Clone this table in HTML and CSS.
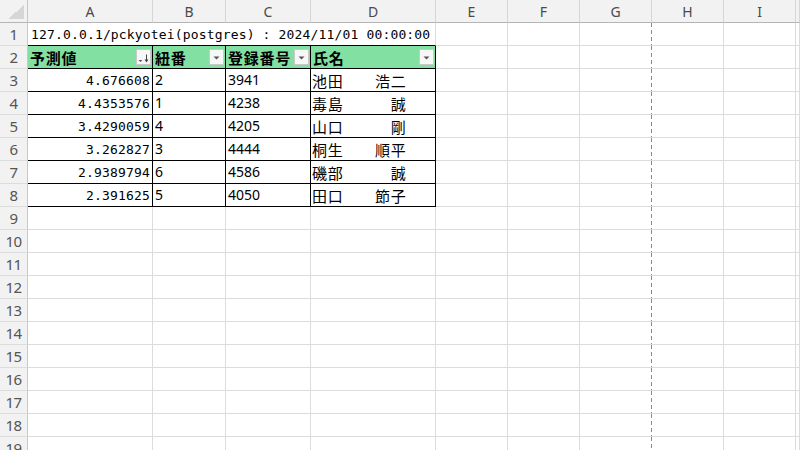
FILE: index.html
```html
<!DOCTYPE html>
<html lang="ja">
<head>
<meta charset="utf-8">
<title>Sheet</title>
<link rel="stylesheet" href="styles.css">
</head>
<body>
<div class="sheet">
  <!-- column headers -->
  <div class="corner"></div>
  <div class="ch">A</div><div class="ch">B</div><div class="ch">C</div><div class="ch">D</div><div class="ch">E</div><div class="ch">F</div><div class="ch">G</div><div class="ch">H</div><div class="ch">I</div><div class="ch"></div>

  <!-- row 1 -->
  <div class="rh">1</div>
  <div class="c title">127.0.0.1/pckyotei(postgres) : 2024/11/01 00:00:00</div>
  <div class="c"></div><div class="c"></div><div class="c pb"></div><div class="c"></div><div class="c"></div><div class="c"></div>

  <!-- row 2 -->
  <div class="rh">2</div>
  <div class="c tb th"><span>予測値</span><span class="fbtn"><svg width="13" height="13" viewBox="0 0 13 13"><polygon points="1.5,9 5.5,9 3.5,11" fill="#555"/><path d="M9.5 3.5V10.5" stroke="#444" stroke-width="1"/><polygon points="7.5,8.5 11.5,8.5 9.5,11.5" fill="#444"/></svg></span></div>
  <div class="c tb th"><span>紐番</span><span class="fbtn"><svg width="13" height="13" viewBox="0 0 13 13"><polygon points="3.5,5.5 9.5,5.5 6.5,8.5" fill="#555"/></svg></span></div>
  <div class="c tb th"><span>登録番号</span><span class="fbtn"><svg width="13" height="13" viewBox="0 0 13 13"><polygon points="3.5,5.5 9.5,5.5 6.5,8.5" fill="#555"/></svg></span></div>
  <div class="c tb th"><span>氏名</span><span class="fbtn"><svg width="13" height="13" viewBox="0 0 13 13"><polygon points="3.5,5.5 9.5,5.5 6.5,8.5" fill="#555"/></svg></span></div>
  <div class="c"></div><div class="c"></div><div class="c pb"></div><div class="c"></div><div class="c"></div><div class="c"></div>

  <!-- row 3 -->
  <div class="rh">3</div>
  <div class="c tb num">4.676608</div><div class="c tb t">2</div><div class="c tb t">3941</div><div class="c tb nm">池田　　浩二</div>
  <div class="c"></div><div class="c"></div><div class="c pb"></div><div class="c"></div><div class="c"></div><div class="c"></div>

  <!-- row 4 -->
  <div class="rh">4</div>
  <div class="c tb num">4.4353576</div><div class="c tb t">1</div><div class="c tb t">4238</div><div class="c tb nm">毒島　　　誠</div>
  <div class="c"></div><div class="c"></div><div class="c pb"></div><div class="c"></div><div class="c"></div><div class="c"></div>

  <!-- row 5 -->
  <div class="rh">5</div>
  <div class="c tb num">3.4290059</div><div class="c tb t">4</div><div class="c tb t">4205</div><div class="c tb nm">山口　　　剛</div>
  <div class="c"></div><div class="c"></div><div class="c pb"></div><div class="c"></div><div class="c"></div><div class="c"></div>

  <!-- row 6 -->
  <div class="rh">6</div>
  <div class="c tb num">3.262827</div><div class="c tb t">3</div><div class="c tb t">4444</div><div class="c tb nm">桐生　　順平</div>
  <div class="c"></div><div class="c"></div><div class="c pb"></div><div class="c"></div><div class="c"></div><div class="c"></div>

  <!-- row 7 -->
  <div class="rh">7</div>
  <div class="c tb num">2.9389794</div><div class="c tb t">6</div><div class="c tb t">4586</div><div class="c tb nm">磯部　　　誠</div>
  <div class="c"></div><div class="c"></div><div class="c pb"></div><div class="c"></div><div class="c"></div><div class="c"></div>

  <!-- row 8 -->
  <div class="rh">8</div>
  <div class="c tb num">2.391625</div><div class="c tb t">5</div><div class="c tb t">4050</div><div class="c tb nm">田口　　節子</div>
  <div class="c"></div><div class="c"></div><div class="c pb"></div><div class="c"></div><div class="c"></div><div class="c"></div>

  <!-- rows 9-19 -->
  <div class="rh">9</div><div class="c"></div><div class="c"></div><div class="c"></div><div class="c"></div><div class="c"></div><div class="c"></div><div class="c pb"></div><div class="c"></div><div class="c"></div><div class="c"></div>
  <div class="rh">10</div><div class="c"></div><div class="c"></div><div class="c"></div><div class="c"></div><div class="c"></div><div class="c"></div><div class="c pb"></div><div class="c"></div><div class="c"></div><div class="c"></div>
  <div class="rh">11</div><div class="c"></div><div class="c"></div><div class="c"></div><div class="c"></div><div class="c"></div><div class="c"></div><div class="c pb"></div><div class="c"></div><div class="c"></div><div class="c"></div>
  <div class="rh">12</div><div class="c"></div><div class="c"></div><div class="c"></div><div class="c"></div><div class="c"></div><div class="c"></div><div class="c pb"></div><div class="c"></div><div class="c"></div><div class="c"></div>
  <div class="rh">13</div><div class="c"></div><div class="c"></div><div class="c"></div><div class="c"></div><div class="c"></div><div class="c"></div><div class="c pb"></div><div class="c"></div><div class="c"></div><div class="c"></div>
  <div class="rh">14</div><div class="c"></div><div class="c"></div><div class="c"></div><div class="c"></div><div class="c"></div><div class="c"></div><div class="c pb"></div><div class="c"></div><div class="c"></div><div class="c"></div>
  <div class="rh">15</div><div class="c"></div><div class="c"></div><div class="c"></div><div class="c"></div><div class="c"></div><div class="c"></div><div class="c pb"></div><div class="c"></div><div class="c"></div><div class="c"></div>
  <div class="rh">16</div><div class="c"></div><div class="c"></div><div class="c"></div><div class="c"></div><div class="c"></div><div class="c"></div><div class="c pb"></div><div class="c"></div><div class="c"></div><div class="c"></div>
  <div class="rh">17</div><div class="c"></div><div class="c"></div><div class="c"></div><div class="c"></div><div class="c"></div><div class="c"></div><div class="c pb"></div><div class="c"></div><div class="c"></div><div class="c"></div>
  <div class="rh">18</div><div class="c"></div><div class="c"></div><div class="c"></div><div class="c"></div><div class="c"></div><div class="c"></div><div class="c pb"></div><div class="c"></div><div class="c"></div><div class="c"></div>
  <div class="rh">19</div><div class="c"></div><div class="c"></div><div class="c"></div><div class="c"></div><div class="c"></div><div class="c"></div><div class="c pb"></div><div class="c"></div><div class="c"></div><div class="c"></div>
</div>
</body>
</html>
```
FILE: styles.css
```css
* { box-sizing: border-box; }
html, body {
  margin: 0;
  padding: 0;
  background: #fff;
  width: 800px;
  height: 450px;
  overflow: hidden;
}
.sheet {
  display: grid;
  grid-template-columns: 28px 125px 73px 85px 125px 72px 72px 72px 72px 72px 1fr;
  grid-auto-rows: 23px;
  width: 800px;
  font-family: "Noto Sans CJK JP", "Noto Sans", sans-serif;
  color: #000;
}
.corner {
  background: #f2f2f2 linear-gradient(to bottom right, transparent 50%, #d6d6d6 50%) no-repeat right 3px bottom 3px / 16px 14px;
  border-right: 1px solid #c8c8c8;
  border-bottom: 1px solid #b5b5b5;
}
.ch {
  background: #f2f2f2;
  border-right: 1px solid #d6d6d6;
  border-bottom: 1px solid #b5b5b5;
  display: flex;
  align-items: center;
  justify-content: center;
  font-family: "Noto Sans", "Open Sans", sans-serif;
  font-size: 14px;
  color: #4a4a4a;
  padding-top: 1px;
}
.rh {
  background: #f2f2f2;
  border-right: 1px solid #c8c8c8;
  border-bottom: 1px solid #dcdcdc;
  display: flex;
  align-items: center;
  justify-content: center;
  font-family: "Noto Sans", "Open Sans", sans-serif;
  font-size: 15px;
  color: #555;
  letter-spacing: -0.5px;
}
.c {
  border-right: 1px solid #dcdcdc;
  border-bottom: 1px solid #dcdcdc;
  display: flex;
  align-items: center;
  white-space: nowrap;
  overflow: hidden;
  font-size: 15px;
  letter-spacing: 0.75px;
  line-height: 1;
}
.c.title {
  grid-column: span 4;
  border-bottom-color: #000;
  font-family: "DejaVu Sans Mono", "Liberation Mono", monospace;
  font-size: 13px;
  letter-spacing: 0.16px;
  padding-left: 3px;
  padding-top: 1px;
}
.c.tb {
  border-right-color: #000;
  border-bottom-color: #000;
}
.c.th {
  background: #82e0a3;
  font-weight: 700;
  justify-content: space-between;
  padding-left: 2px;
  padding-right: 1px;
}
.fbtn {
  width: 15px;
  height: 16px;
  background: #f7f7f7;
  border: 1px solid #c9c9c9;
  display: flex;
  align-items: center;
  justify-content: center;
}
.c.num {
  justify-content: flex-end;
  padding-right: 2px;
  font-family: "DejaVu Sans Mono", "Liberation Mono", monospace;
  font-size: 13px;
  letter-spacing: 0.16px;
  padding-top: 1px;
}
.c.t {
  font-family: "Noto Sans", "Open Sans", sans-serif;
  font-size: 14px;
  letter-spacing: 0;
  padding-left: 2px;
}
.c.nm {
  padding-left: 1px;
}
.c.pb {
  border-right: none;
  padding-right: 1px;
  background: repeating-linear-gradient(to bottom, #8a8a8a 0 4px, transparent 4px 7px) no-repeat right top / 1px 100%;
}
```
